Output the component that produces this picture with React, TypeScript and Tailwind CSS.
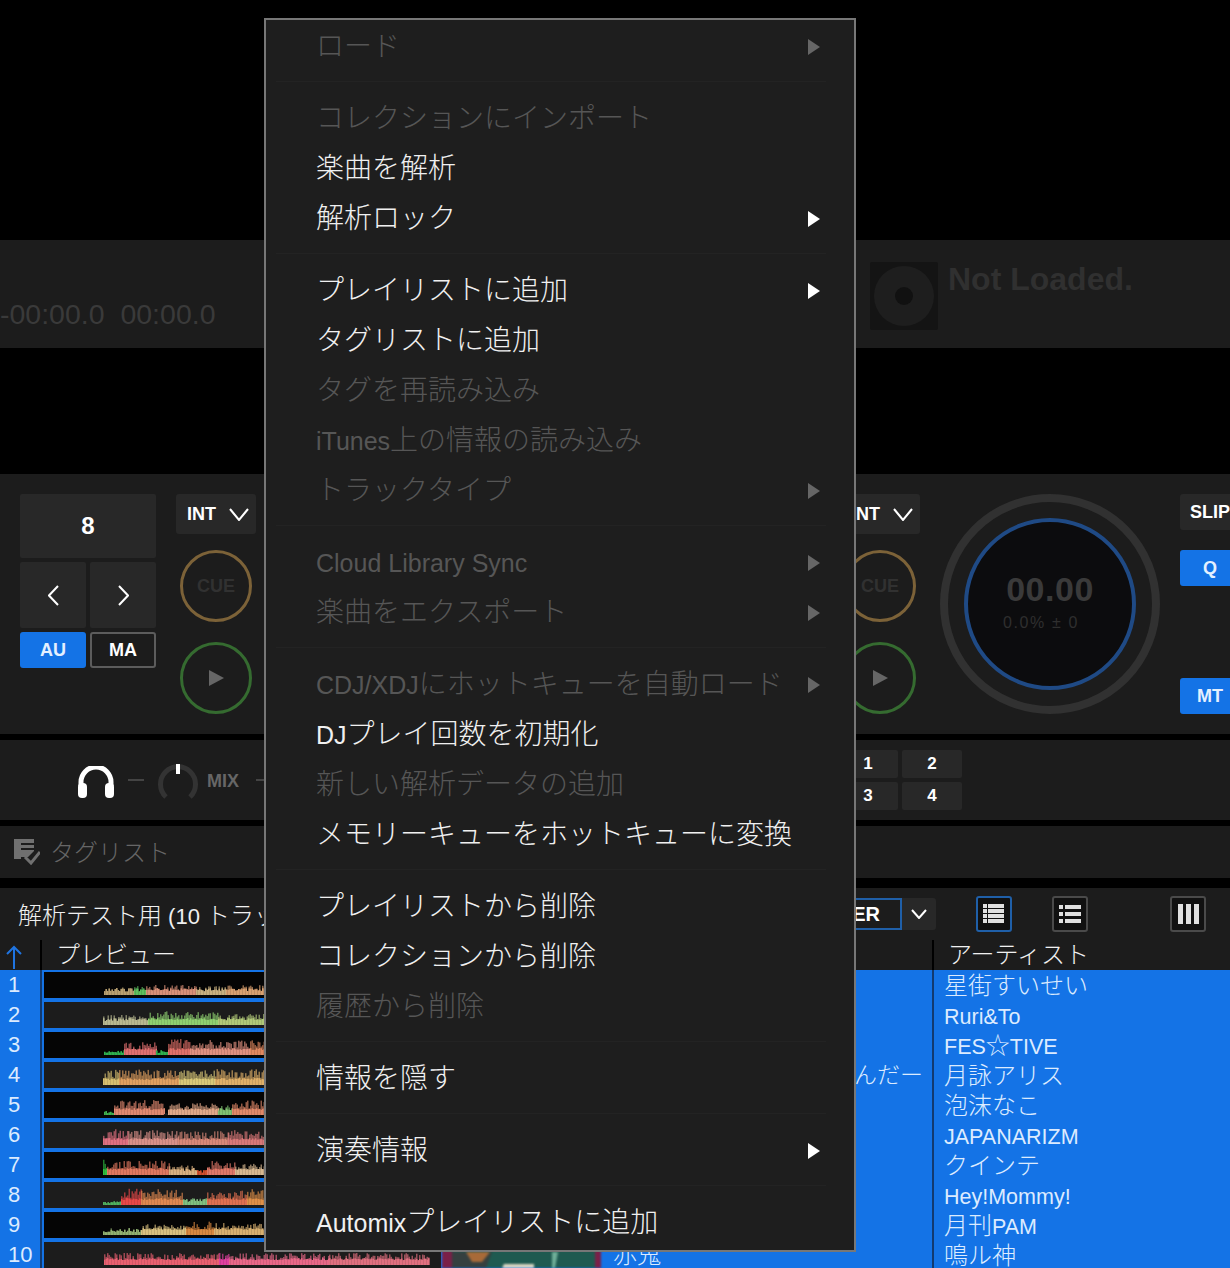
import { ReactNode } from 'react';

const JP = "font-['Liberation_Sans','Noto_Sans_CJK_JP',sans-serif]";

type MenuEntry = { label: string; off?: boolean; sub?: boolean } | 'sep';

const MENU: MenuEntry[] = [
  { label: 'ロード', off: true, sub: true },
  'sep',
  { label: 'コレクションにインポート', off: true },
  { label: '楽曲を解析' },
  { label: '解析ロック', sub: true },
  'sep',
  { label: 'プレイリストに追加', sub: true },
  { label: 'タグリストに追加' },
  { label: 'タグを再読み込み', off: true },
  { label: 'iTunes上の情報の読み込み', off: true },
  { label: 'トラックタイプ', off: true, sub: true },
  'sep',
  { label: 'Cloud Library Sync', off: true, sub: true },
  { label: '楽曲をエクスポート', off: true, sub: true },
  'sep',
  { label: 'CDJ/XDJにホットキューを自動ロード', off: true, sub: true },
  { label: 'DJプレイ回数を初期化' },
  { label: '新しい解析データの追加', off: true },
  { label: 'メモリーキューをホットキューに変換' },
  'sep',
  { label: 'プレイリストから削除' },
  { label: 'コレクションから削除' },
  { label: '履歴から削除', off: true },
  'sep',
  { label: '情報を隠す' },
  'sep',
  { label: '演奏情報', sub: true },
  'sep',
  { label: 'Automixプレイリストに追加' },
];

// [length, colour, height] runs along the preview
type Run = [number, string, number];
const ROWS: { artist: string; title?: string; start: number; runs: Run[] }[] = [
  { artist: '星街すいせい', start: 60, runs: [[30, '#b8a070', 8], [12, '#5fbf5f', 9], [50, '#d89078', 10], [30, '#c8b080', 9], [60, '#d8a070', 10]] },
  { artist: 'Ruri&To', start: 59, runs: [[45, '#b8b890', 10], [70, '#8fd070', 14], [50, '#b0c878', 11], [40, '#80d060', 14]] },
  { artist: 'FES☆TIVE', start: 60, runs: [[20, '#30b050', 5], [32, '#e07070', 13], [12, '#30b050', 5], [22, '#e07068', 16], [60, '#e09080', 15], [60, '#e08860', 15]] },
  { artist: '月詠アリス', title: 'なんでもないんだー', start: 59, runs: [[16, '#d8c070', 16], [60, '#e0a060', 16], [36, '#d8c878', 15], [70, '#e0b068', 16]] },
  { artist: '泡沫なこ', start: 60, runs: [[10, '#40b050', 4], [50, '#e08870', 15], [4, '#202020', 2], [50, '#e0a888', 12], [14, '#80c070', 10], [50, '#e08868', 15]] },
  { artist: 'JAPANARIZM', start: 59, runs: [[25, '#e07080', 16], [50, '#d89088', 15], [50, '#d88878', 14], [40, '#d87878', 15]] },
  { artist: 'クインテ', start: 59, runs: [[4, '#30c040', 16], [62, '#e07860', 15], [28, '#d8b080', 10], [10, '#d05030', 5], [28, '#e07868', 14], [50, '#d8b890', 12]] },
  { artist: 'Hey!Mommy!', start: 59, runs: [[18, '#50b060', 4], [20, '#e84848', 17], [42, '#e08850', 17], [24, '#80c080', 7], [40, '#e07050', 15], [30, '#e09048', 16]] },
  { artist: '月刊PAM', start: 59, runs: [[38, '#90b070', 7], [45, '#d8c080', 11], [28, '#d88840', 14], [60, '#d8b070', 12]] },
  { artist: '鳴ル神', title: '赤鬼', start: 60, runs: [[115, '#e86070', 12], [10, '#e040a0', 14], [100, '#e86888', 12], [100, '#e07080', 12]] },
];

// Latin runs sit smaller than the kana next to them in the reference
function Mixed({ text, latin }: { text: string; latin: string }) {
  return (
    <>
      {text.split(/([A-Za-z0-9&!/(). ]+)/).map((part, i) =>
        i % 2 ? (
          <span key={i} className={latin}>
            {part}
          </span>
        ) : (
          part
        ),
      )}
    </>
  );
}

function Waveform({ seed, start, runs }: { seed: number; start: number; runs: Run[] }) {
  let s = seed * 7919 + 13;
  const rnd = () => {
    s = (s * 16807) % 2147483647;
    return (s % 1000) / 1000;
  };
  const bars: ReactNode[] = [];
  let x = start;
  for (const [len, color, h] of runs) {
    for (let i = 0; i < len; i += 1.5) {
      const bh = h * (0.4 + rnd() * 0.6);
      const base = Math.min(bh, 5 + rnd() * 2);
      bars.push(
        <g key={x + i}>
          <rect x={x + i} y={23 - bh} width="1.5" height={bh} fill={color} opacity="0.65" />
          <rect x={x + i} y={23 - base} width="1.5" height={base} fill={color} />
        </g>,
      );
    }
    x += len;
  }
  return (
    <svg width="397" height="26" viewBox="0 0 397 26" className="block blur-[0.5px]">
      {bars}
    </svg>
  );
}

function Tri({ className }: { className: string }) {
  return (
    <svg viewBox="0 0 12 16" preserveAspectRatio="none" className={className}>
      <polygon points="0,0 12,8 0,16" fill="currentColor" />
    </svg>
  );
}

function Chevron({ width, height, dir = 'down' }: { width: number; height: number; dir?: 'down' | 'left' | 'right' }) {
  const d = {
    down: `M1 1 L${width / 2} ${height - 1} L${width - 1} 1`,
    left: `M${width - 1} 1 L1 ${height / 2} L${width - 1} ${height - 1}`,
    right: `M1 1 L${width - 1} ${height / 2} L1 ${height - 1}`,
  }[dir];
  return (
    <svg width={width} height={height} viewBox={`0 0 ${width} ${height}`}>
      <path d={d} fill="none" stroke="#fff" strokeWidth="2" />
    </svg>
  );
}

function ContextMenu() {
  return (
    <div className={`absolute left-[264px] top-[18px] w-[592px] h-[1234px] bg-[#1e1e1e] border-2 border-[#777] pl-[10px] pr-[28px] ${JP}`}>
      {MENU.map((m, i) =>
        m === 'sep' ? (
          <div key={i} className="h-[22px] flex items-center">
            <div className="h-px w-full bg-[#232323]" />
          </div>
        ) : (
          <div
            key={i}
            className={`h-[50px] pt-[4px] pl-[40px] pr-[6px] flex items-center justify-between text-[28px] font-light whitespace-nowrap ${
              m.off ? 'text-[#565656]' : 'text-[#f0f0f0]'
            }`}
          >
            <span>
              <Mixed text={m.label} latin="text-[25px]" />
            </span>
            {m.sub && <Tri className={`w-[12px] h-[16px] ${m.off ? 'text-[#666]' : 'text-white'}`} />}
          </div>
        ),
      )}
    </div>
  );
}

function RoundBtn({ color, children }: { color: string; children: ReactNode }) {
  return (
    <div className={`w-[72px] h-[72px] rounded-full border-[3px] ${color} flex items-center justify-center`}>{children}</div>
  );
}

function TransportColumn() {
  return (
    <div className="flex flex-col items-center gap-[16px]">
      <div className="w-[80px] h-[40px] bg-[#282828] rounded-[3px] flex items-center pl-[11px] gap-[13px] text-white font-bold text-[18px]">
        INT <Chevron width={20} height={13} />
      </div>
      <div className="flex flex-col gap-[20px]">
        <RoundBtn color="border-[#7c6238]">
          <span className="text-[#313131] font-bold text-[18px]">CUE</span>
        </RoundBtn>
        <RoundBtn color="border-[#356b30]">
          <Tri className="w-[15px] h-[16px] text-[#666]" />
        </RoundBtn>
      </div>
    </div>
  );
}

function BlueBtn({ label, width }: { label: string; width: string }) {
  return (
    <div className={`${width} h-[36px] bg-[#1473e6] rounded-[3px] flex items-center justify-center text-[#e4f0ff] font-bold text-[18px]`}>
      {label}
    </div>
  );
}

function Deck() {
  return (
    <div className="h-[260px] bg-[#1c1c1c] flex justify-between pt-[20px] pl-[20px] overflow-hidden">
      <div className="flex gap-[20px]">
        <div className="w-[136px] flex flex-col gap-[4px]">
          <div className="h-[64px] bg-[#282828] rounded-[2px] flex items-center justify-center text-white font-bold text-[24px]">8</div>
          <div className="flex gap-[4px]">
            <div className="w-[66px] h-[66px] bg-[#282828] rounded-[2px] flex items-center justify-center">
              <Chevron width={11} height={21} dir="left" />
            </div>
            <div className="w-[66px] h-[66px] bg-[#282828] rounded-[2px] flex items-center justify-center">
              <Chevron width={11} height={21} dir="right" />
            </div>
          </div>
          <div className="flex gap-[4px]">
            <BlueBtn label="AU" width="w-[66px]" />
            <div className="w-[66px] h-[36px] border-2 border-[#5c5c5c] rounded-[3px] flex items-center justify-center text-white font-bold text-[18px]">MA</div>
          </div>
        </div>
        <TransportColumn />
      </div>
      <div className="flex gap-[20px]">
        <TransportColumn />
        <div className="w-[220px] h-[220px] rounded-full border-[8px] border-[#313131] flex items-center justify-center">
          <div className="w-[172px] h-[172px] rounded-full bg-[#0c0c0e] border-[4px] border-[#1f4a85] flex flex-col items-center pt-[45px]">
            <span className="text-[#3a3a3a] font-bold text-[34px] leading-[44px] tracking-[0.5px]">00.00</span>
            <span className="text-[#2f2f2f] text-[16px] leading-[20px] mt-[2px] mr-[18px] tracking-[1.6px]">0.0% ± 0</span>
          </div>
        </div>
        <div className="w-[50px] flex flex-col">
          <div className="w-[66px] h-[36px] bg-[#282828] rounded-[3px] flex items-center pl-[10px] text-white font-bold text-[18px]">SLIP</div>
          <div className="mt-[20px]"><BlueBtn label="Q" width="w-[60px]" /></div>
          <div className="mt-[92px]"><BlueBtn label="MT" width="w-[60px]" /></div>
        </div>
      </div>
    </div>
  );
}

function Pad({ n }: { n: number }) {
  return <div className="w-[60px] h-[28px] bg-[#282828] rounded-[2px] flex items-center justify-center text-white font-bold text-[17px]">{n}</div>;
}

function Mixer() {
  return (
    <div className="mt-[6px] h-[80px] bg-[#1c1c1c] flex items-center pl-[78px] overflow-hidden">
      <svg width="36" height="32" viewBox="0 0 36 32" className="mt-[3px]">
        <path d="M3 20 V16 a15 15 0 0 1 30 0 V20" fill="none" stroke="#fff" strokeWidth="5" />
        <rect x="0" y="17" width="9" height="15" rx="4" fill="#fff" />
        <rect x="27" y="17" width="9" height="15" rx="4" fill="#fff" />
      </svg>
      <div className="ml-[14px] w-[16px] h-[2px] bg-[#444]" />
      <svg width="40" height="36" viewBox="0 0 40 36" className="ml-[14px] mt-[3px]">
        <path d="M8 33 A17.5 17.5 0 1 1 32 33" fill="none" stroke="#333" strokeWidth="5" />
        <rect x="18" y="0" width="4" height="10" fill="#fff" />
      </svg>
      <span className="ml-[9px] pt-[3px] text-[#666] font-bold text-[18px]">MIX</span>
      <div className="ml-[17px] w-[16px] h-[2px] bg-[#444]" />
      <div className="ml-auto mr-[268px] grid grid-cols-[60px_60px] gap-[4px]">
        <Pad n={1} />
        <Pad n={2} />
        <Pad n={3} />
        <Pad n={4} />
      </div>
    </div>
  );
}

function TagBar() {
  return (
    <div className={`mt-[6px] h-[52px] bg-[#1c1c1c] flex items-center pl-[14px] gap-[10px] text-[#666] text-[24px] font-light ${JP}`}>
      <svg width="26" height="26" viewBox="0 0 26 26">
        <path d="M0 0 H20 V4 H7 V6 H20 V9 H7 V11 H20 V12 L14 18 H7 V20 H0 Z" fill="#707070" />
        <path d="M11 18 L17 24 L26 13" fill="none" stroke="#707070" strokeWidth="3" />
      </svg>
      <span className="pt-[2px]">タグリスト</span>
    </div>
  );
}

function ListIcon({ kind, active }: { kind: 'rows' | 'list' | 'cols'; active?: boolean }) {
  return (
    <div className={`w-[36px] h-[36px] rounded-[3px] border-2 ${active ? 'border-[#1f5fa8]' : 'border-[#4a4a4a]'} bg-[#111] flex items-center justify-center`}>
      <svg width="22" height="22" viewBox="0 0 22 22" fill="#e0e0e0">
        {kind === 'rows' &&
          [1, 6, 11, 16].map((y) => (
            <g key={y}>
              <rect x="0" y={y} width="4" height="4" />
              <rect x="5" y={y} width="16" height="4" />
            </g>
          ))}
        {kind === 'list' &&
          [2, 9, 16].map((y) => (
            <g key={y}>
              <rect x="0" y={y} width="4" height="4" />
              <rect x="6" y={y} width="16" height="4" />
            </g>
          ))}
        {kind === 'cols' &&
          [1, 9, 17].map((x) => <rect key={x} x={x} y="1" width="5" height="20" />)}
      </svg>
    </div>
  );
}

function Toolbar() {
  return (
    <div className={`mt-[10px] h-[52px] bg-[#1c1c1c] flex items-center pl-[18px] text-[#f0f0f0] ${JP}`}>
      <span className="text-[24px] font-light whitespace-nowrap pt-[3px]">
        <Mixed text="解析テスト用 (10 トラック)" latin="text-[22px]" />
      </span>
      <div className="ml-auto flex items-center">
        <div className="w-[60px] h-[32px] border-2 border-[#1f5fa8] flex items-center justify-end pr-[20px] text-white font-bold text-[20px]">ER</div>
        <div className="w-[34px] h-[32px] bg-[#282828] rounded-r-[3px] flex items-center justify-center">
          <Chevron width={16} height={10} />
        </div>
        <div className="ml-[40px]"><ListIcon kind="rows" active /></div>
        <div className="ml-[40px]"><ListIcon kind="list" /></div>
        <div className="ml-[82px] mr-[24px]"><ListIcon kind="cols" /></div>
      </div>
    </div>
  );
}

function AlbumArt() {
  return (
    <svg width="159" height="26" viewBox="0 0 159 26" className="block blur-[1px]">
      <rect width="159" height="26" fill="#1f5a50" />
      <path d="M10 10 H50 L44 26 H10 Z" fill="#35403f" />
      <path d="M24 10 H48 L40 20 H30 Z" fill="#a86a38" />
      <path d="M62 22 H92 V26 H60 Z" fill="#dcd8c4" />
      <path d="M110 10 H116 L113 26 H110 Z" fill="#6fae98" />
      <rect width="10" height="26" fill="#7a2048" />
      <rect x="153" width="6" height="26" fill="#7a2048" />
    </svg>
  );
}

function TrackTable() {
  return (
    <div className={JP}>
      <div className="h-[30px] bg-[#1c1c1c] flex items-center text-[#f0f0f0] text-[24px] font-light">
        <div className="w-[40px] pl-[6px] pt-[4px]">
          <svg width="16" height="24" viewBox="0 0 16 24" className="block">
            <path d="M8 24 V2 M1 9 L8 2 L15 9" fill="none" stroke="#1f74e0" strokeWidth="2" />
          </svg>
        </div>
        <div className="w-[2px] h-full bg-black" />
        <span className="ml-[14px]">プレビュー</span>
        <div className="ml-auto w-[298px] h-full border-l-2 border-black pl-[14px] flex items-center">
          アーティスト
        </div>
      </div>
      {ROWS.map((r, i) => (
        <div key={r.artist} className="h-[30px] bg-[#1473e6] flex text-[#dcebff] text-[24px] font-light leading-[30px] whitespace-nowrap">
          <div className="w-[40px] pl-[8px] text-[22px]">{i + 1}</div>
          <div className="w-[2px] bg-[#123a70]" />
          <div className={`ml-[2px] w-[397px] h-[26px] my-[2px] overflow-hidden ${i % 2 ? 'bg-[#1c1c1c]' : 'bg-[#050505]'}`}>
            <Waveform seed={i + 1} start={r.start} runs={r.runs} />
          </div>
          <div className="ml-[1px] w-[159px] h-[26px] my-[2px]">{i === 9 && <AlbumArt />}</div>
          <div className="ml-[1px] w-[330px] pr-[9px] pl-[11px] flex justify-end">
            {r.title && <span className={i === 9 ? 'mr-auto' : 'text-[23px]'}>{r.title}</span>}
          </div>
          <div className="w-[2px] bg-[#123a70]" />
          <div className="pl-[10px] pt-px">
            <Mixed text={r.artist} latin="text-[21.5px]" />
          </div>
        </div>
      ))}
    </div>
  );
}

export default function App() {
  return (
    <div className={`relative w-[1230px] h-[1268px] bg-black overflow-hidden font-['Liberation_Sans',sans-serif]`}>
      <div className="h-[240px]" />
      <div className="h-[108px] bg-[#1c1c1c] flex justify-between overflow-hidden">
        <div className="self-end pb-[12px] text-[#3a3a3a] text-[28.5px] whitespace-pre">-00:00.0  00:00.0</div>
        <div className="w-[360px] flex gap-[10px] pt-[22px]">
          <div className="w-[68px] h-[68px] bg-[#141414] rounded-[2px] flex items-center justify-center">
            <div className="w-[60px] h-[60px] rounded-full bg-[#1e1e1e] flex items-center justify-center">
              <div className="w-[18px] h-[18px] rounded-full bg-[#111]" />
            </div>
          </div>
          <span className="text-[#303030] font-bold text-[32px] leading-[34px]">Not Loaded.</span>
        </div>
      </div>
      <div className="h-[126px]" />
      <Deck />
      <Mixer />
      <TagBar />
      <Toolbar />
      <TrackTable />
      <ContextMenu />
    </div>
  );
}
